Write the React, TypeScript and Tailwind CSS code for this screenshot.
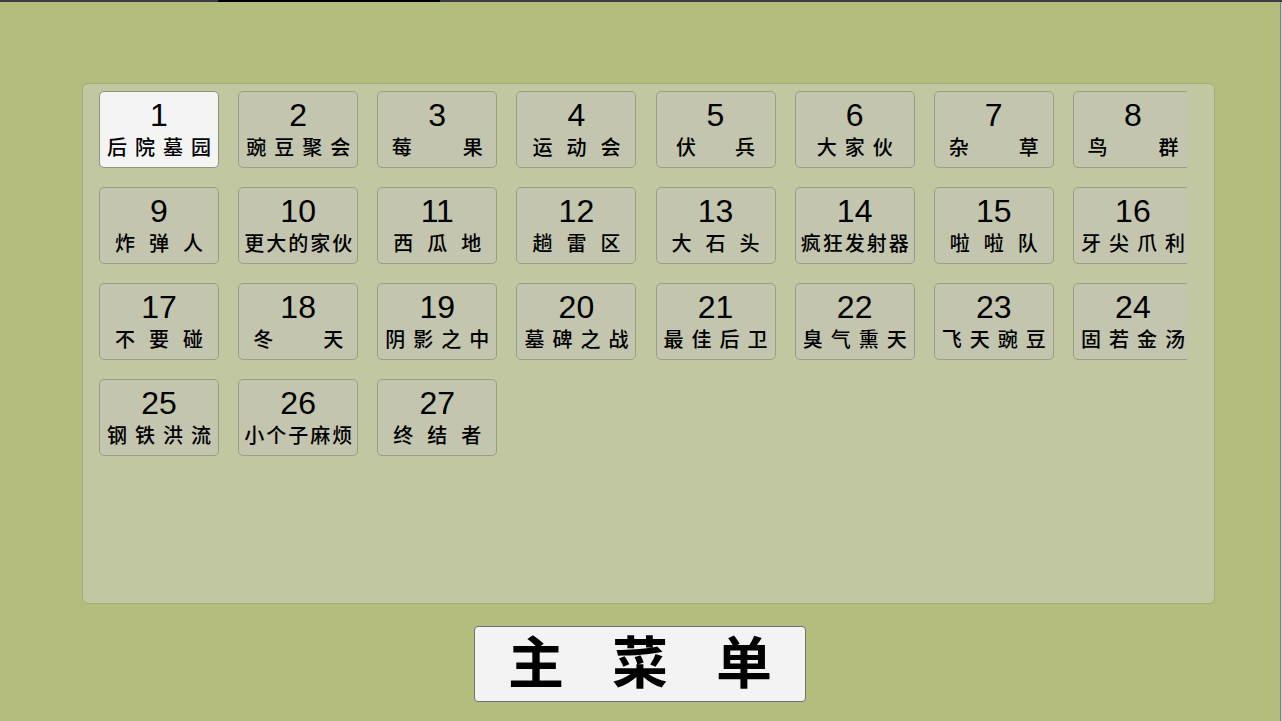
import React from 'react'

interface Level {
  num: number
  chars: string[]
  gap: string
}

// 关卡名按字拆开，gap 对应原图里每格文字的字距
const levels: Level[] = [
  { num: 1, chars: ['后', '院', '墓', '园'], gap: 'gap-[8px]' },
  { num: 2, chars: ['豌', '豆', '聚', '会'], gap: 'gap-[8px]' },
  { num: 3, chars: ['莓', '果'], gap: 'gap-[51px]' },
  { num: 4, chars: ['运', '动', '会'], gap: 'gap-[14px]' },
  { num: 5, chars: ['伏', '兵'], gap: 'gap-[39px]' },
  { num: 6, chars: ['大', '家', '伙'], gap: 'gap-[8px]' },
  { num: 7, chars: ['杂', '草'], gap: 'gap-[50px]' },
  { num: 8, chars: ['鸟', '群'], gap: 'gap-[51px]' },
  { num: 9, chars: ['炸', '弹', '人'], gap: 'gap-[14px]' },
  { num: 10, chars: ['更', '大', '的', '家', '伙'], gap: 'gap-[2px]' },
  { num: 11, chars: ['西', '瓜', '地'], gap: 'gap-[14px]' },
  { num: 12, chars: ['趟', '雷', '区'], gap: 'gap-[14px]' },
  { num: 13, chars: ['大', '石', '头'], gap: 'gap-[14px]' },
  { num: 14, chars: ['疯', '狂', '发', '射', '器'], gap: 'gap-[2px]' },
  { num: 15, chars: ['啦', '啦', '队'], gap: 'gap-[14px]' },
  { num: 16, chars: ['牙', '尖', '爪', '利'], gap: 'gap-[8px]' },
  { num: 17, chars: ['不', '要', '碰'], gap: 'gap-[14px]' },
  { num: 18, chars: ['冬', '天'], gap: 'gap-[50px]' },
  { num: 19, chars: ['阴', '影', '之', '中'], gap: 'gap-[8px]' },
  { num: 20, chars: ['墓', '碑', '之', '战'], gap: 'gap-[8px]' },
  { num: 21, chars: ['最', '佳', '后', '卫'], gap: 'gap-[8px]' },
  { num: 22, chars: ['臭', '气', '熏', '天'], gap: 'gap-[8px]' },
  { num: 23, chars: ['飞', '天', '豌', '豆'], gap: 'gap-[8px]' },
  { num: 24, chars: ['固', '若', '金', '汤'], gap: 'gap-[8px]' },
  { num: 25, chars: ['钢', '铁', '洪', '流'], gap: 'gap-[8px]' },
  { num: 26, chars: ['小', '个', '子', '麻', '烦'], gap: 'gap-[2px]' },
  { num: 27, chars: ['终', '结', '者'], gap: 'gap-[14px]' },
]

function LevelTile({ level, active }: { level: Level; active: boolean }) {
  return (
    <div
      className={`w-[120px] h-[77px] rounded-[5px] border flex flex-col items-center pt-[7px] ${
        active ? 'bg-[#f4f4f4] border-[#8f9378]' : 'bg-[#c3c5af] border-[#9a9e84]'
      }`}
    >
      <span className="text-[32px] leading-[32px] text-black font-['Liberation_Sans',Arial,sans-serif]">
        {level.num}
      </span>
      <div className={`mt-[6px] flex ${level.gap} text-[20px] leading-[20px] font-medium text-black font-['Noto_Sans_CJK_SC',sans-serif]`}>
        {level.chars.map((c, i) => (
          <span key={i}>{c}</span>
        ))}
      </div>
    </div>
  )
}

export default function App() {
  return (
    <div className="w-[1282px] h-[721px] flex bg-[#b5bd7e] overflow-hidden">
      <div className="w-[1280px] flex flex-col">
        {/* top strip */}
        <div className="h-[2px] flex">
          <div className="w-[218px] bg-[#3c3d44]" />
          <div className="w-[222px] bg-black" />
          <div className="flex-1 bg-[#3c3d44]" />
        </div>

        {/* level panel */}
        <div className="ml-[82px] mt-[81px] w-[1133px] h-[521px] rounded-[6px] border border-[#a5ac7c] bg-[#c1c7a0] pl-[16px] pt-[7px]">
          <div className="w-[1088px] overflow-hidden">
            <div className="grid grid-cols-[repeat(8,120px)] gap-x-[19.14px] gap-y-[19px] w-[1100px]">
              {levels.map((lv) => (
                <LevelTile key={lv.num} level={lv} active={lv.num === 1} />
              ))}
            </div>
          </div>
        </div>

        {/* main menu button */}
        <div className="mt-[22px] ml-[474px] w-[332px] h-[76px] rounded-[4px] border border-[#6e6e6e] bg-[#f3f3f3] flex items-center justify-center pb-[10px]">
          <div className="flex gap-[48px] text-[56px] leading-[56px] font-bold text-black font-['Noto_Sans_CJK_SC',sans-serif]">
            <span>主</span>
            <span>菜</span>
            <span>单</span>
          </div>
        </div>
      </div>

      {/* right edge */}
      <div className="w-[2px] flex flex-col">
        <div className="h-[2px] bg-[#3c3d44]" />
        <div className="flex-1 border-l border-[#7d7d7d] bg-[#cfcfcf]" />
      </div>
    </div>
  )
}
